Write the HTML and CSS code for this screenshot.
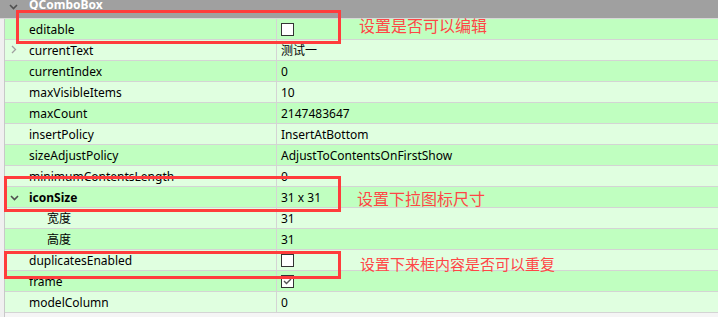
FILE: index.html
```html
<!DOCTYPE html>
<html lang="zh-CN">
  <head>
    <meta charset="UTF-8">
    <title>QComboBox 属性</title>
    <link rel="stylesheet" href="styles.css">
  </head>
  <body>
    <div class="editor">
      <div class="gutter"></div>
      <div class="sheet">
        <div class="group">
          <svg class="arrow" width="9" height="6" viewBox="0 0 9 6"><polyline points="1,1 4.5,4.5 8,1" /></svg>
          <span class="groupName">QComboBox</span>
        </div>

        <div class="row dark">
          <div class="name">editable</div>
          <div class="value"><span class="check"></span></div>
        </div>
        <div class="row light">
          <div class="name">
            <svg class="expand" width="6" height="9" viewBox="0 0 6 9"><polyline points="1,1 4.5,4.5 1,8" /></svg>
            currentText
          </div>
          <div class="value">测试一</div>
        </div>
        <div class="row dark">
          <div class="name">currentIndex</div>
          <div class="value">0</div>
        </div>
        <div class="row light">
          <div class="name">maxVisibleItems</div>
          <div class="value">10</div>
        </div>
        <div class="row dark">
          <div class="name">maxCount</div>
          <div class="value">2147483647</div>
        </div>
        <div class="row light">
          <div class="name">insertPolicy</div>
          <div class="value">InsertAtBottom</div>
        </div>
        <div class="row dark">
          <div class="name">sizeAdjustPolicy</div>
          <div class="value">AdjustToContentsOnFirstShow</div>
        </div>
        <div class="row light">
          <div class="name">minimumContentsLength</div>
          <div class="value">0</div>
        </div>
        <div class="row dark">
          <div class="name bold">
            <svg class="arrow" width="9" height="6" viewBox="0 0 9 6"><polyline points="1,1 4.5,4.5 8,1" /></svg>
            iconSize
          </div>
          <div class="value">31 x 31</div>
        </div>
        <div class="row light">
          <div class="name sub">宽度</div>
          <div class="value">31</div>
        </div>
        <div class="row dark">
          <div class="name sub">高度</div>
          <div class="value">31</div>
        </div>
        <div class="row light">
          <div class="name">duplicatesEnabled</div>
          <div class="value"><span class="check"></span></div>
        </div>
        <div class="row dark">
          <div class="name">frame</div>
          <div class="value">
            <span class="check">
              <svg width="11" height="11" viewBox="0 0 11 11"><polyline points="2,5 4.5,7.5 9,3" /></svg>
            </span>
          </div>
        </div>
        <div class="row light">
          <div class="name">modelColumn</div>
          <div class="value">0</div>
        </div>
      </div>

      <!-- annotations drawn over the screenshot -->
      <div class="mark markEditable"></div>
      <div class="note noteEditable">设置是否可以编辑</div>
      <div class="mark markIcon"></div>
      <div class="note noteIcon">设置下拉图标尺寸</div>
      <div class="mark markDup"></div>
      <div class="note noteDup">设置下来框内容是否可以重复</div>
    </div>
  </body>
</html>
```

FILE: styles.css
```css
:root {
    --dark: #c0ffc0;
    --light: #e0ffe0;
    --grid: #d4d4d4;
    --red: #ff3c3c;
}
* {
    box-sizing: border-box;
}
body {
    margin: 0;
    background: #f5f5f5;
    font-family: "Noto Sans", "Noto Sans CJK SC", sans-serif;
    font-size: 12px;
    color: #000;
    overflow: hidden;
}
.editor {
    position: relative;
    display: flex;
    height: 317px;
}
.gutter {
    width: 5px;
    flex: none;
    border-right: 1px solid #c8c8c8;
    background: #f0f0f0;
    margin-top: 19px;
}
.sheet {
    flex: 1;
}
.group {
    height: 19px;
    margin-left: -5px;
    padding-left: 29px;
    background: #a0a0a0;
    border-bottom: 1px solid #d8d8d8;
    overflow: hidden;
    position: relative;
    color: #fff;
    font-weight: bold;
}
.group .arrow {
    position: absolute;
    left: 9px;
    top: 4px;
}
.groupName {
    display: block;
    line-height: 16px;
    margin-top: -3px;
}
.row {
    display: flex;
    height: 21px;
    border-bottom: 1px solid var(--grid);
}
.dark {
    background: var(--dark);
}
.light {
    background: var(--light);
}
.name {
    width: 272px;
    flex: none;
    padding: 1px 0 0 24px;
    border-right: 1px solid var(--grid);
    line-height: 19px;
    position: relative;
    white-space: nowrap;
}
.name.sub {
    padding-left: 42px;
}
.name.bold {
    font-weight: bold;
}
.value {
    flex: 1;
    padding: 1px 0 0 4px;
    line-height: 19px;
    display: flex;
    align-items: center;
    white-space: nowrap;
}
.arrow polyline, .expand polyline {
    fill: none;
    stroke-width: 1.6;
}
.arrow polyline {
    stroke: #505050;
}
.expand polyline {
    stroke: #a0a0a0;
    stroke-width: 1.3;
}
.name .arrow {
    position: absolute;
    left: 5px;
    top: 8px;
}
.name .expand {
    position: absolute;
    left: 6px;
    top: 5px;
}
.check {
    width: 13px;
    height: 13px;
    border: 1px solid #333;
    background: #fff;
    display: block;
}
.check svg {
    display: block;
}
.check polyline {
    fill: none;
    stroke: #555;
    stroke-width: 1.4;
}
.mark {
    position: absolute;
    border: 3px solid var(--red);
}
.markEditable {
    left: 16px;
    top: 10px;
    width: 325px;
    height: 34px;
}
.markIcon {
    left: 4px;
    top: 176px;
    width: 337px;
    height: 36px;
}
.markDup {
    left: 4px;
    top: 251px;
    width: 337px;
    height: 28px;
}
.note {
    position: absolute;
    color: #ff4646;
    font-family: "Noto Sans CJK SC", sans-serif;
    font-size: 16px;
    line-height: 20px;
    white-space: nowrap;
}
.noteEditable {
    left: 359px;
    top: 15px;
}
.noteIcon {
    left: 357px;
    top: 188px;
}
.noteDup {
    left: 360px;
    top: 254px;
    font-size: 15px;
}
```
